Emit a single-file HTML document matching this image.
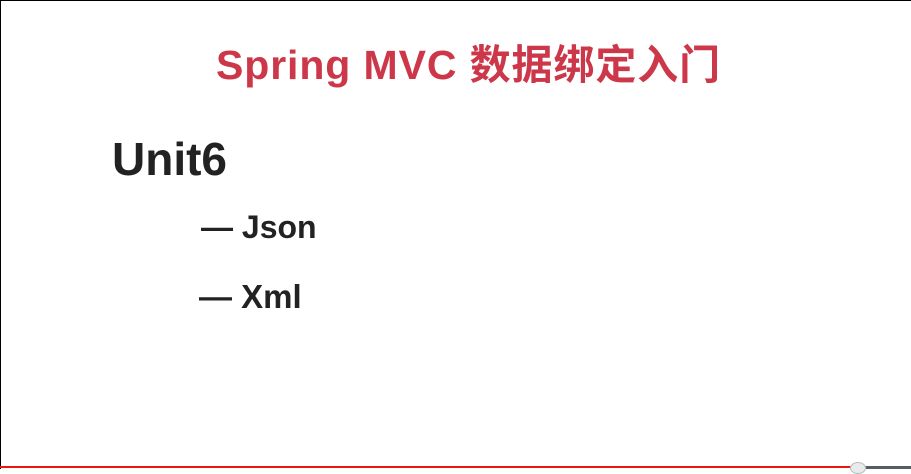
<!DOCTYPE html>
<html><head><meta charset="utf-8"><style>
html,body{margin:0;padding:0;}
body{width:911px;height:469px;position:relative;background:#fff;overflow:hidden;font-family:"Liberation Sans","Noto Sans CJK SC",sans-serif;font-weight:bold;}
.b{position:absolute;}
.t{position:absolute;white-space:nowrap;line-height:1;}
</style></head><body>
<div class="b" style="left:0;top:0;width:911px;height:1px;background:#000"></div>
<div class="b" style="left:0;top:0;width:1px;height:469px;background:#000"></div>
<div class="b" style="left:0;top:466px;width:855px;height:2px;background:#e8180c"></div>
<div class="b" style="left:863px;top:466px;width:48px;height:3px;background:#555d66"></div>
<div class="b" style="left:850px;top:462px;width:14px;height:10px;border-radius:50%;background:#e8eaec;border:1px solid #bbb"></div>
<div class="t" style="left:216px;top:45px;font-size:41px;color:#cc3849;letter-spacing:0.9px">Spring MVC 数据绑定入门</div>
<div class="t" style="left:112px;top:136px;font-size:46px;color:#222">Unit6</div>
<div class="t" style="left:201px;top:211px;font-size:32px;color:#222">— Json</div>
<div class="t" style="left:199px;top:280px;font-size:33px;color:#222">— Xml</div>
</body></html>
